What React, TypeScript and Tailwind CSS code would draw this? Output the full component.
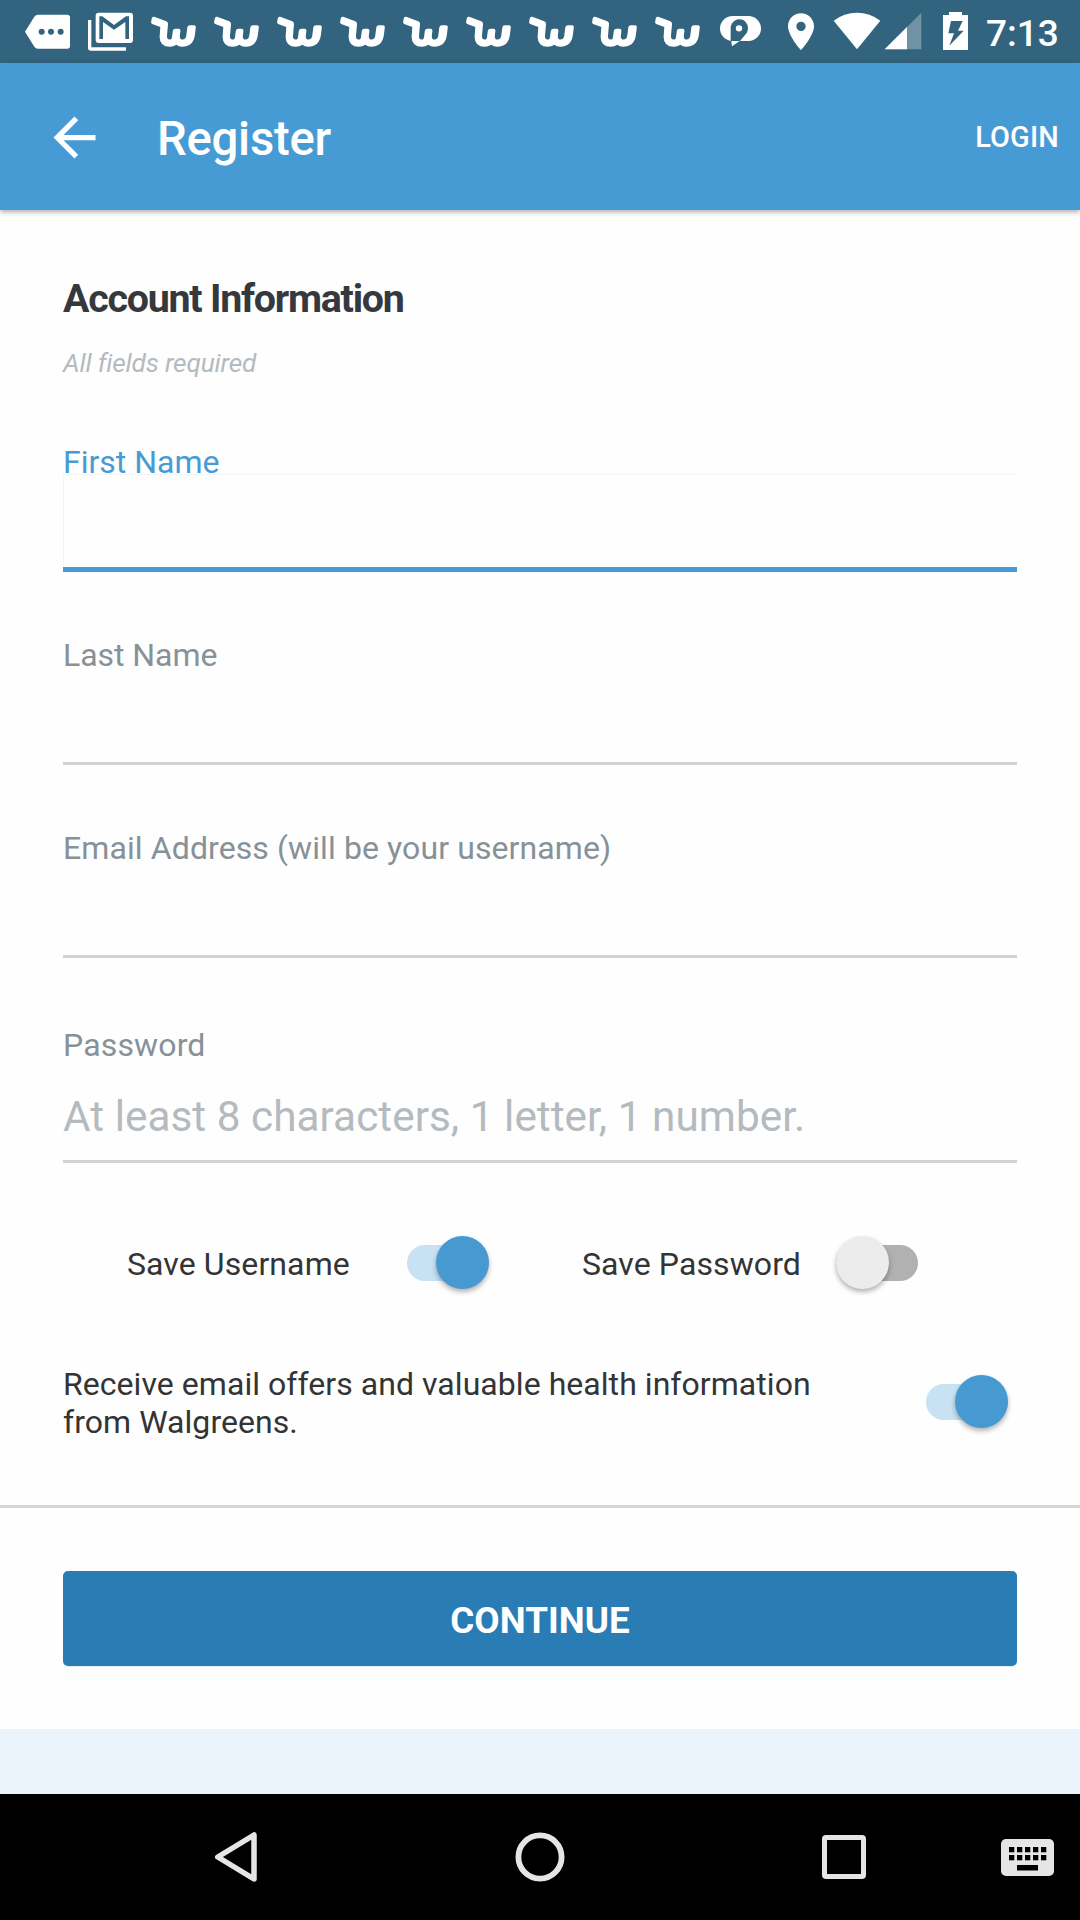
import React from 'react';

function MoreIcon() {
  return (
    <svg viewBox="75 0 135 189" className="ml-[25px] h-[63px] w-[45px] shrink-0">
      <path
        fillRule="evenodd"
        fill="#fff"
        d="M75 95L103 50Q107 44 114 44H202Q210 44 210 52V138Q210 146 202 146H114Q107 146 103 140ZM134 95a9 9 0 1 0-18 0a9 9 0 1 0 18 0ZM162 95a9 9 0 1 0-18 0a9 9 0 1 0 18 0ZM191 95a9 9 0 1 0-18 0a9 9 0 1 0 18 0Z"
      />
    </svg>
  );
}

function MailIcon() {
  return (
    <svg viewBox="264 0 135 189" className="ml-[18px] h-[63px] w-[45px] shrink-0">
      <rect x="287" y="38" width="112" height="91" rx="9" fill="#fff" />
      <path d="M264 60H274V142H378V152H273Q264 152 264 143Z" fill="#fff" />
      <path d="M298 117V49H307L342 75L378 49H387V117H376V66L342 89L309 66V117Z" fill="#32647F" />
    </svg>
  );
}

function WishIcon() {
  return (
    <svg viewBox="0 -16 45 63" className="ml-[18px] h-[63px] w-[45px] shrink-0">
      <path
        fill="#fff"
        d="M3.2 .8L15.2 5.2Q17.2 6 17 8.2L16 19.8Q15.8 23.6 18.6 23.6Q20.8 23.6 21.1 20.4L21.8 15Q22.2 12.8 24.4 12.8H27.6Q29.6 12.8 29.4 15L28.8 20Q28.6 23.6 31.4 23.6Q34.8 23.6 35.3 19.6L36.3 11.6Q36.6 9.2 39 9.2H43Q45 9.2 44.8 11.4L43.8 19.6Q42.2 30.8 31 30.8Q27.6 30.8 25.4 28.8Q22.4 30.8 18.8 30.8Q8.8 30.8 8.6 21L9.3 11L1.2 8Q-.2 7.4 .2 5.6L.8 2.2Q1.4 .2 3.2 .8Z"
      />
    </svg>
  );
}

function ChatIcon() {
  return (
    <svg viewBox="0 0 126 189" className="ml-[20px] h-[63px] w-[42px] shrink-0">
      <rect x="0" y="48" width="123" height="75" rx="37.5" fill="#fff" />
      <path d="M32 123V84A26 27 0 1 1 77 103L60 123Z" fill="#32647F" />
      <path d="M34 123H59L36 139Z" fill="#fff" />
      <circle cx="57" cy="85" r="9.5" fill="#fff" />
    </svg>
  );
}

function PinIcon() {
  return (
    <svg viewBox="198 0 90 189" className="ml-[24px] h-[63px] w-[30px] shrink-0">
      <path
        fillRule="evenodd"
        fill="#fff"
        d="M243 40C221 40 204 57 204 79C204 108 243 151 243 151S282 108 282 79C282 57 265 40 243 40ZM243 93a14 14 0 1 1 0-28a14 14 0 1 1 0 28Z"
      />
    </svg>
  );
}

function WifiIcon() {
  return (
    <svg viewBox="339 0 144 189" className="ml-[17px] h-[63px] w-[48px] shrink-0">
      <path d="M411 148L341 62Q372 38 411 38T481 62Z" fill="#fff" />
    </svg>
  );
}

function SignalIcon() {
  return (
    <svg viewBox="492 0 114 189" className="ml-[3px] h-[63px] w-[38px] shrink-0">
      <path d="M494 148L604 38V148Z" fill="#fff" fillOpacity=".3" />
      <path d="M494 148L561 81V148Z" fill="#fff" />
    </svg>
  );
}

function BatteryIcon() {
  return (
    <svg viewBox="666 0 81 189" className="ml-[20px] h-[63px] w-[27px] shrink-0">
      <path
        fillRule="evenodd"
        fill="#fff"
        d="M669 45H687V36H726V45H744V150H669ZM693 63L685 100H702L688 137L731 92H714L728 63Z"
      />
    </svg>
  );
}

function StatusBar() {
  return (
    <div className="flex h-[63px] items-center bg-[#32647F]">
      <MoreIcon />
      <MailIcon />
      {Array.from({ length: 9 }, (_, i) => (
        <WishIcon key={i} />
      ))}
      <ChatIcon />
      <PinIcon />
      <WifiIcon />
      <SignalIcon />
      <BatteryIcon />
      <span className="ml-[17px] mt-[3px] text-[37px] leading-[43px] font-medium text-white">7:13</span>
    </div>
  );
}

function AppBar() {
  return (
    <header className="relative flex h-[147px] items-center bg-[#479BD4] text-white shadow-[0_2px_5px_rgba(0,0,0,0.32)]">
      <svg viewBox="0 0 24 24" className="ml-[42.5px] mt-[1px] h-[63px] w-[63px]" fill="#fff">
        <path d="M20 11H7.83l5.59-5.59L12 4l-8 8 8 8 1.41-1.41L7.83 13H20v-2z" />
      </svg>
      <h1 className="ml-[51.5px] mt-[4px] text-[47.25px] leading-[56px] font-medium tracking-[-0.25px]">Register</h1>
      <span className="mr-[21px] ml-auto mt-[1px] text-[28.875px] leading-[34px] font-medium tracking-[0.2px]">
        LOGIN
      </span>
    </header>
  );
}

function Field({
  label,
  className,
  labelClass,
  boxClass,
  children,
}: {
  label: string;
  className: string;
  labelClass: string;
  boxClass: string;
  children?: React.ReactNode;
}) {
  return (
    <div className={className}>
      <div className={`text-[32px] leading-[37px] ${labelClass}`}>{label}</div>
      <div className={boxClass}>{children}</div>
    </div>
  );
}

function Toggle({ on, className = '' }: { on: boolean; className?: string }) {
  return (
    <div className={`flex h-[53px] w-[82px] shrink-0 items-center ${className}`}>
      <div
        className={`flex h-[36px] w-full items-center rounded-full ${
          on ? 'justify-end bg-[#C8E1F3]' : 'justify-start bg-[#B1B1B1]'
        }`}
      >
        <div
          className={`size-[53px] shrink-0 rounded-full shadow-[0_3px_5px_rgba(0,0,0,0.3)] ${
            on ? 'bg-[#4799D1]' : 'bg-[#ECECEC]'
          }`}
        />
      </div>
    </div>
  );
}

function NavBar() {
  return (
    <nav className="flex h-[126px] items-center bg-black">
      <svg
        viewBox="0 0 48 56"
        className="ml-[212px] h-[56px] w-[48px]"
        fill="none"
        stroke="#E5E5E5"
        strokeWidth="5.5"
        strokeLinejoin="round"
      >
        <path d="M5.8 28L42 6V50Z" />
      </svg>
      <svg viewBox="0 0 50 50" className="ml-[255px] h-[50px] w-[50px]" fill="none" stroke="#E5E5E5" strokeWidth="5.8">
        <circle cx="25" cy="25" r="21.6" />
      </svg>
      <div className="ml-[257px] size-[44px] rounded-[4px] border-[5.5px] border-[#E5E5E5]" />
      <svg viewBox="0 0 53 37" className="ml-[135px] mt-[1px] h-[37px] w-[53px]">
        <rect width="53" height="37" rx="5" fill="#E5E5E5" />
        {[8, 16, 24, 32, 40].map((x) => (
          <g key={x}>
            <rect x={x} y="8" width="5.3" height="5.3" />
            <rect x={x} y="16" width="5.3" height="5.3" />
          </g>
        ))}
        <rect x="16" y="26" width="21" height="5.5" />
      </svg>
    </nav>
  );
}

export default function App() {
  return (
    <div className="flex h-[1920px] w-[1080px] flex-col overflow-hidden bg-[#FEFEFE] font-[Roboto,sans-serif]">
      <StatusBar />
      <AppBar />
      <main className="flex h-[1584px] flex-col">
        <section className="px-[63px] pt-[66px]">
          <h2 className="text-[39.375px] leading-[46px] font-bold tracking-[-1.25px] text-[#35383D]">
            Account Information
          </h2>
          <p className="mt-[26px] text-[26.25px] leading-[30px] tracking-[-0.2px] text-[#B4BABE] italic">
            All fields required
          </p>

          <Field
            label="First Name"
            className="mt-[66px]"
            labelClass="text-[#479BD4]"
            boxClass="-mt-[7px] h-[98px] border-b-[5px] border-[#479BD4]"
          >
            <div className="h-full border-t border-l border-[#F0F6FA]" />
          </Field>
          <Field
            label="Last Name"
            className="mt-[65px]"
            labelClass="text-[#879198] tracking-[-0.05px]"
            boxClass="h-[91px] border-b-[3px] border-[#D3D3D3]"
          />
          <Field
            label="Email Address (will be your username)"
            className="mt-[65px]"
            labelClass="text-[#879198] tracking-[0.1px]"
            boxClass="h-[91px] border-b-[3px] border-[#D3D3D3]"
          />
          <Field
            label="Password"
            className="mt-[69px]"
            labelClass="text-[#879198] tracking-[0.15px]"
            boxClass="h-[99px] border-b-[3px] border-[#D1D4D6] pt-[28px]"
          >
            <span className="block text-[42.3px] leading-[50px] tracking-[0.03px] text-[#B4BABE]">
              At least 8 characters, 1 letter, 1 number.
            </span>
          </Field>

          <div className="mt-[73px] flex items-start text-[32px] leading-[37px] text-[#333435]">
            <span className="mt-[10px] ml-[64px] w-[280px] tracking-[0.1px]">Save Username</span>
            <Toggle on />
            <span className="mt-[10px] ml-[93px] w-[254px] tracking-[0.1px]">Save Password</span>
            <Toggle on={false} />
          </div>

          <div className="mt-[76px] flex items-start justify-between pr-[9px] text-[32px] leading-[38px] text-[#333435]">
            <p className="tracking-[0.05px]">
              Receive email offers and valuable health information
              <br />
              from Walgreens.
            </p>
            <Toggle on className="mt-[10px]" />
          </div>
        </section>

        <section className="mt-[64px] border-t-[3px] border-[#D6D6D6] px-[63px] pt-[63px] pb-[63px]">
          <button className="block h-[95px] w-full rounded-[5px] bg-[#2A7CB5] pt-[4px] text-[36.75px] leading-[43px] font-bold tracking-[0.05px] text-white shadow-[0_1px_0_#E4EEF5]">
            CONTINUE
          </button>
        </section>
        <div className="flex-1 bg-[#EBF4FB]" />
      </main>
      <NavBar />
    </div>
  );
}
